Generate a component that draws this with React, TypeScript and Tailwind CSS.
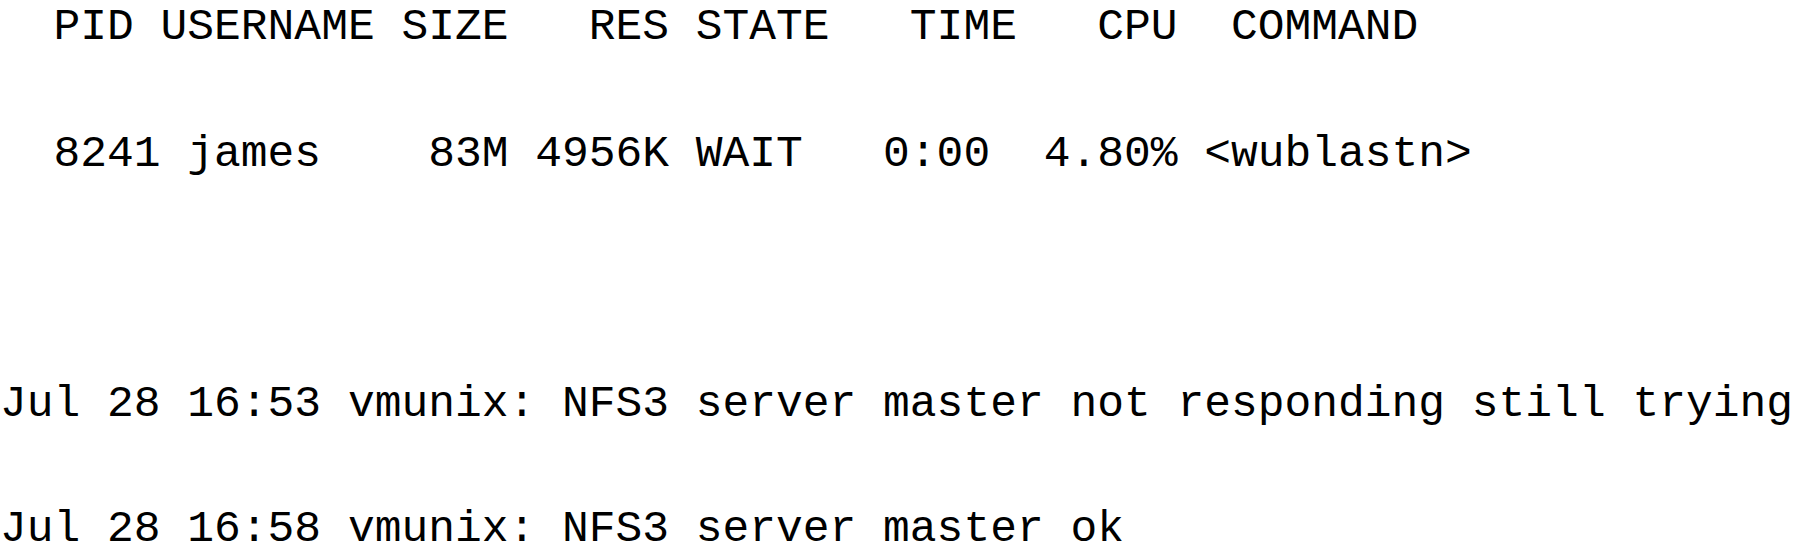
import React from 'react';

// top-style process listing followed by two kernel log lines
const header = '  PID USERNAME SIZE   RES STATE   TIME   CPU  COMMAND';
const proc = '  8241 james    83M 4956K WAIT   0:00  4.80% <wublastn>';
const logs = [
    'Jul 28 16:53 vmunix: NFS3 server master not responding still trying',
    'Jul 28 16:58 vmunix: NFS3 server master ok',
];

export default function App() {
    return (
        <div className="w-[1800px] h-[550px] bg-white text-black overflow-hidden pt-[2px] font-['Liberation_Mono',monospace] text-[44.6px] leading-[50px] whitespace-pre">
            <div>{header}</div>
            <div className="mt-[77px]">{proc}</div>
            <div className="mt-[200px]">{logs[0]}</div>
            <div className="mt-[80px] leading-[40px]">{logs[1]}</div>
        </div>
    );
}
